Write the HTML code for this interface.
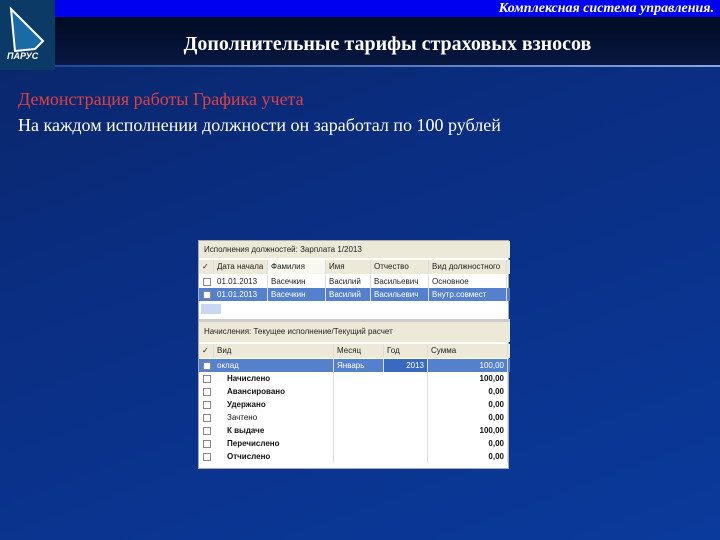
<!DOCTYPE html><html><head><meta charset="utf-8"><style>
*{margin:0;padding:0;box-sizing:border-box}
body{width:720px;height:540px;overflow:hidden;position:relative;background:linear-gradient(160deg,#0a2566 0%,#0a2d80 35%,#0a3a9c 100%);font-family:"Liberation Serif",serif}
.a{position:absolute}
.t{font-family:"Liberation Sans",sans-serif;font-size:8px;color:#222;white-space:nowrap}
.row{position:absolute;left:0;width:311px;height:13px}
.c{position:absolute;top:0;height:100%;padding-left:3px;line-height:13px;border-right:1px solid #ddd;overflow:hidden}
.cb{position:absolute;left:4px;top:3px;width:8px;height:8px;border:1px solid #888;background:#fff}
</style></head><body>
<div class="a" style="left:55px;top:0;width:665px;height:17px;background:#0000f0"></div>
<div class="a" style="left:55px;top:17px;width:665px;height:49px;background:linear-gradient(180deg,#020a22,#061842)"></div>
<div class="a" style="left:55px;top:65px;width:665px;height:2px;background:linear-gradient(90deg,#1a4aa0,#8aa8d8)"></div>
<div class="a" style="left:0;top:0;width:55px;height:70px;background:#0b3a66"></div>
<svg class="a" style="left:5px;top:5px" width="45" height="55"><path d="M6 4 L38 36 L30 44 L10 46 Z" fill="#1a6aa8" stroke="#fff" stroke-width="2"/><text x="2" y="54" font-size="9" font-style="italic" font-weight="bold" fill="#fff" font-family="Liberation Sans">ПАРУС</text></svg>
<div class="a" style="right:6px;top:0px;color:#fff;font-style:italic;font-weight:bold;font-size:14px;line-height:17px">Комплексная система управления.</div>
<div class="a" style="left:55px;width:665px;top:33px;text-align:center;color:#fff;font-weight:bold;font-size:20px">Дополнительные тарифы страховых взносов</div>
<div class="a" style="left:18px;top:89px;color:#e04040;font-size:18px">Демонстрация работы Графика учета</div>
<div class="a" style="left:18px;top:115px;color:#fff;font-size:18px">На каждом исполнении должности он заработал по 100 рублей</div>

<div class="a" style="left:198px;top:240px;width:311px;height:229px;background:#fff;border:1px solid #aaa">
<div class="a t" style="left:0;top:0;width:311px;height:17px;background:#ece9d8;line-height:17px;padding-left:5px">Исполнения должностей: Зарплата 1/2013</div>
<div class="row t" style="top:19px;height:14px;background:#ece9d8"><div class="c" style="left:0;width:15px">✓</div><div class="c" style="left:15px;width:54px">Дата начала</div><div class="c" style="left:69px;width:58px;background:#f8f8f0">Фамилия</div><div class="c" style="left:127px;width:45px">Имя</div><div class="c" style="left:172px;width:58px">Отчество</div><div class="c" style="left:230px;width:78px">Вид должностного</div></div>
<div class="row t" style="top:34px"><div class="cb"></div><div class="c" style="left:15px;width:54px">01.01.2013</div><div class="c" style="left:69px;width:58px">Васечкин</div><div class="c" style="left:127px;width:45px">Василий</div><div class="c" style="left:172px;width:58px">Васильевич</div><div class="c" style="left:230px;width:78px">Основное</div></div>
<div class="row t" style="top:47px;background:#5480cc;color:#fff"><div class="cb"></div><div class="c" style="left:15px;width:54px">01.01.2013</div><div class="c" style="left:69px;width:58px">Васечкин</div><div class="c" style="left:127px;width:45px">Василий</div><div class="c" style="left:172px;width:58px">Васильевич</div><div class="c" style="left:230px;width:78px">Внутр.совмест</div></div>
<div class="a" style="left:2px;top:63px;width:20px;height:10px;background:#c8d8f0"></div>
<div class="a" style="left:0;top:78px;width:311px;height:3px;background:#ccc"></div>
<div class="a t" style="left:0;top:81px;width:311px;height:20px;background:#ece9d8;line-height:20px;padding-left:5px">Начисления: Текущее исполнение/Текущий расчет</div>
<div class="row t" style="top:103px;height:14px;background:#ece9d8"><div class="c" style="left:0;width:15px">✓</div><div class="c" style="left:15px;width:120px">Вид</div><div class="c" style="left:135px;width:50px">Месяц</div><div class="c" style="left:185px;width:44px">Год</div><div class="c" style="left:229px;width:80px">Сумма</div></div>
<div class="row t" style="top:118px;background:#5480cc;color:#fff"><div class="cb"></div><div class="c" style="left:15px;width:120px">оклад</div><div class="c" style="left:135px;width:50px">Январь</div><div class="c" style="left:185px;width:44px;text-align:right;padding-right:3px;background:#3a6ac0">2013</div><div class="c" style="left:229px;width:80px;text-align:right;padding-right:3px">100,00</div></div>
<div class="a" style="left:0;top:131px;width:311px;font-family:'Liberation Sans',sans-serif;font-size:8px;font-weight:bold;color:#111">
<div class="row" style="top:0"><div class="cb"></div><div class="c" style="left:15px;width:120px;padding-left:13px">Начислено</div><div class="c" style="left:135px;width:94px"></div><div class="c" style="left:229px;width:80px;text-align:right;padding-right:3px">100,00</div></div>
<div class="row" style="top:13px"><div class="cb"></div><div class="c" style="left:15px;width:120px;padding-left:13px">Авансировано</div><div class="c" style="left:135px;width:94px"></div><div class="c" style="left:229px;width:80px;text-align:right;padding-right:3px">0,00</div></div>
<div class="row" style="top:26px"><div class="cb"></div><div class="c" style="left:15px;width:120px;padding-left:13px">Удержано</div><div class="c" style="left:135px;width:94px"></div><div class="c" style="left:229px;width:80px;text-align:right;padding-right:3px">0,00</div></div>
<div class="row" style="top:39px"><div class="cb"></div><div class="c" style="left:15px;width:120px;padding-left:13px;font-weight:normal">Зачтено</div><div class="c" style="left:135px;width:94px"></div><div class="c" style="left:229px;width:80px;text-align:right;padding-right:3px">0,00</div></div>
<div class="row" style="top:52px"><div class="cb"></div><div class="c" style="left:15px;width:120px;padding-left:13px">К выдаче</div><div class="c" style="left:135px;width:94px"></div><div class="c" style="left:229px;width:80px;text-align:right;padding-right:3px">100,00</div></div>
<div class="row" style="top:65px"><div class="cb"></div><div class="c" style="left:15px;width:120px;padding-left:13px">Перечислено</div><div class="c" style="left:135px;width:94px"></div><div class="c" style="left:229px;width:80px;text-align:right;padding-right:3px">0,00</div></div>
<div class="row" style="top:78px"><div class="cb"></div><div class="c" style="left:15px;width:120px;padding-left:13px">Отчислено</div><div class="c" style="left:135px;width:94px"></div><div class="c" style="left:229px;width:80px;text-align:right;padding-right:3px">0,00</div></div>
</div>
</div>
</body></html>
